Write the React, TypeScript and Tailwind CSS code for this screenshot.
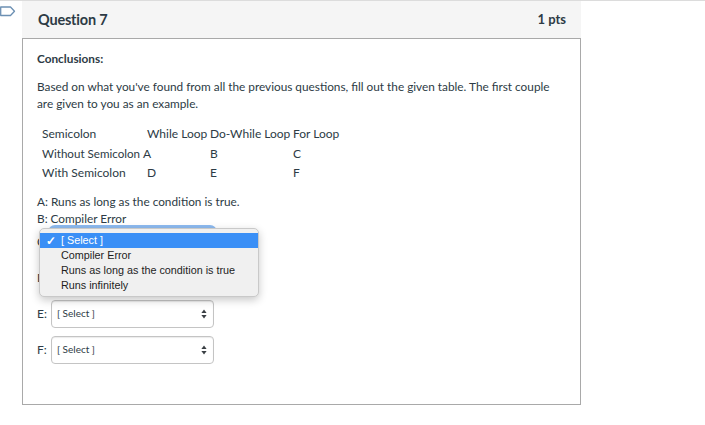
import React from "react";

const Arrows = () => (
  <svg width="6" height="10" viewBox="0 0 6 10" className="shrink-0">
    <path d="M3 0.5 L5.6 4 H0.4 Z" fill="#3a3f44" />
    <path d="M3 9.5 L5.6 6 H0.4 Z" fill="#3a3f44" />
  </svg>
);

const SelectBox = ({ focus }: { focus?: boolean }) => (
  <div
    className={
      "w-[163px] h-[28px] rounded-[4px] border border-[#c4c4c4] bg-white flex items-center justify-between pl-[5px] pr-[6px] shadow-[inset_0_1px_1px_rgba(0,0,0,0.08)] " +
      (focus ? "outline outline-[3px] outline-[#8dbaf0]" : "")
    }
  >
    <span className="text-[10px] text-[#2d3b45]">[ Select ]</span>
    <Arrows />
  </div>
);

const Row = ({ label, focus }: { label: string; focus?: boolean }) => (
  <div className="flex items-center h-[28px]">
    <span className="w-[14px] text-[12px]">{label}</span>
    <SelectBox focus={focus} />
  </div>
);

export default function App() {
  return (
    <div
      className="w-[705px] h-[425px] bg-white relative overflow-hidden text-[#2d3b45]"
      style={{ fontFamily: "Lato, 'Liberation Sans', sans-serif" }}
    >
      <div className="h-[1px] bg-[#dcdcdc]" />
      <div className="flex">
        <div className="w-[22px] relative">
          <svg width="16" height="12" viewBox="0 0 16 12" className="absolute left-0 top-[5px]">
            <path
              d="M0.7 1 H10.5 L14.5 5.2 L10.5 9.5 H0.7 Z"
              fill="none"
              stroke="#6c90b3"
              strokeWidth="1.3"
              strokeLinejoin="round"
            />
          </svg>
        </div>
        <div className="w-[559px]">
          <div className="h-[38px] bg-[#f5f5f5] border-b border-[#a9a9a9] flex items-center justify-between pl-[16px] pr-[15px]">
            <span className="font-bold text-[14.5px] tracking-[-0.2px]">Question 7</span>
            <span className="font-bold text-[13px]">1 pts</span>
          </div>
          <div className="h-[366px] border-x border-b border-[#a9a9a9] pl-[14px] pr-[15px] pt-[11px] text-[11.8px]">
            <div className="font-bold leading-[18px]">Conclusions:</div>
            <p className="mt-[11px] leading-[16.5px]">
              Based on what you've found from all the previous questions, fill out the given table. The first couple
              are given to you as an example.
            </p>
            <div className="mt-[12px] ml-[5px] grid grid-cols-[105px_63px_83px_auto] leading-[19.5px] text-[12px]">
              <span>Semicolon</span>
              <span>While Loop</span>
              <span>Do-While Loop</span>
              <span>For Loop</span>
              <span className="text-[11.6px]">Without Semicolon</span>
              <span className="-ml-[4px]">A</span>
              <span>B</span>
              <span>C</span>
              <span>With Semicolon</span>
              <span>D</span>
              <span>E</span>
              <span>F</span>
            </div>
            <div className="mt-[10px] leading-[17px] text-[11.8px]">A: Runs as long as the condition is true.</div>
            <div className="leading-[17px] text-[11.8px]">B: Compiler Error</div>
            <div className="mt-[1px] flex flex-col gap-[8px]">
              <Row label="C:" focus />
              <Row label="D:" />
              <Row label="E:" />
              <Row label="F:" />
            </div>
          </div>
        </div>
      </div>

      <div
        className="absolute left-[39px] top-[228px] w-[220px] h-[69px] rounded-[5px] border border-[#c9c9c9] bg-[#f0f0f0] shadow-[0_3px_8px_rgba(0,0,0,0.22)] py-[4px] text-[10.8px] text-[#1d1d1d]"
        style={{ fontFamily: "'Liberation Sans', Arial, sans-serif" }}
      >
        <div className="h-[15px] bg-[#3a8ff6] text-white flex items-center">
          <span className="w-[21px] pl-[6px] text-[12px] font-bold leading-none">✓</span>
          <span>[ Select ]</span>
        </div>
        <div className="h-[15px] flex items-center pl-[21px]">Compiler Error</div>
        <div className="h-[15px] flex items-center pl-[21px]">Runs as long as the condition is true</div>
        <div className="h-[15px] flex items-center pl-[21px]">Runs infinitely</div>
      </div>
    </div>
  );
}
